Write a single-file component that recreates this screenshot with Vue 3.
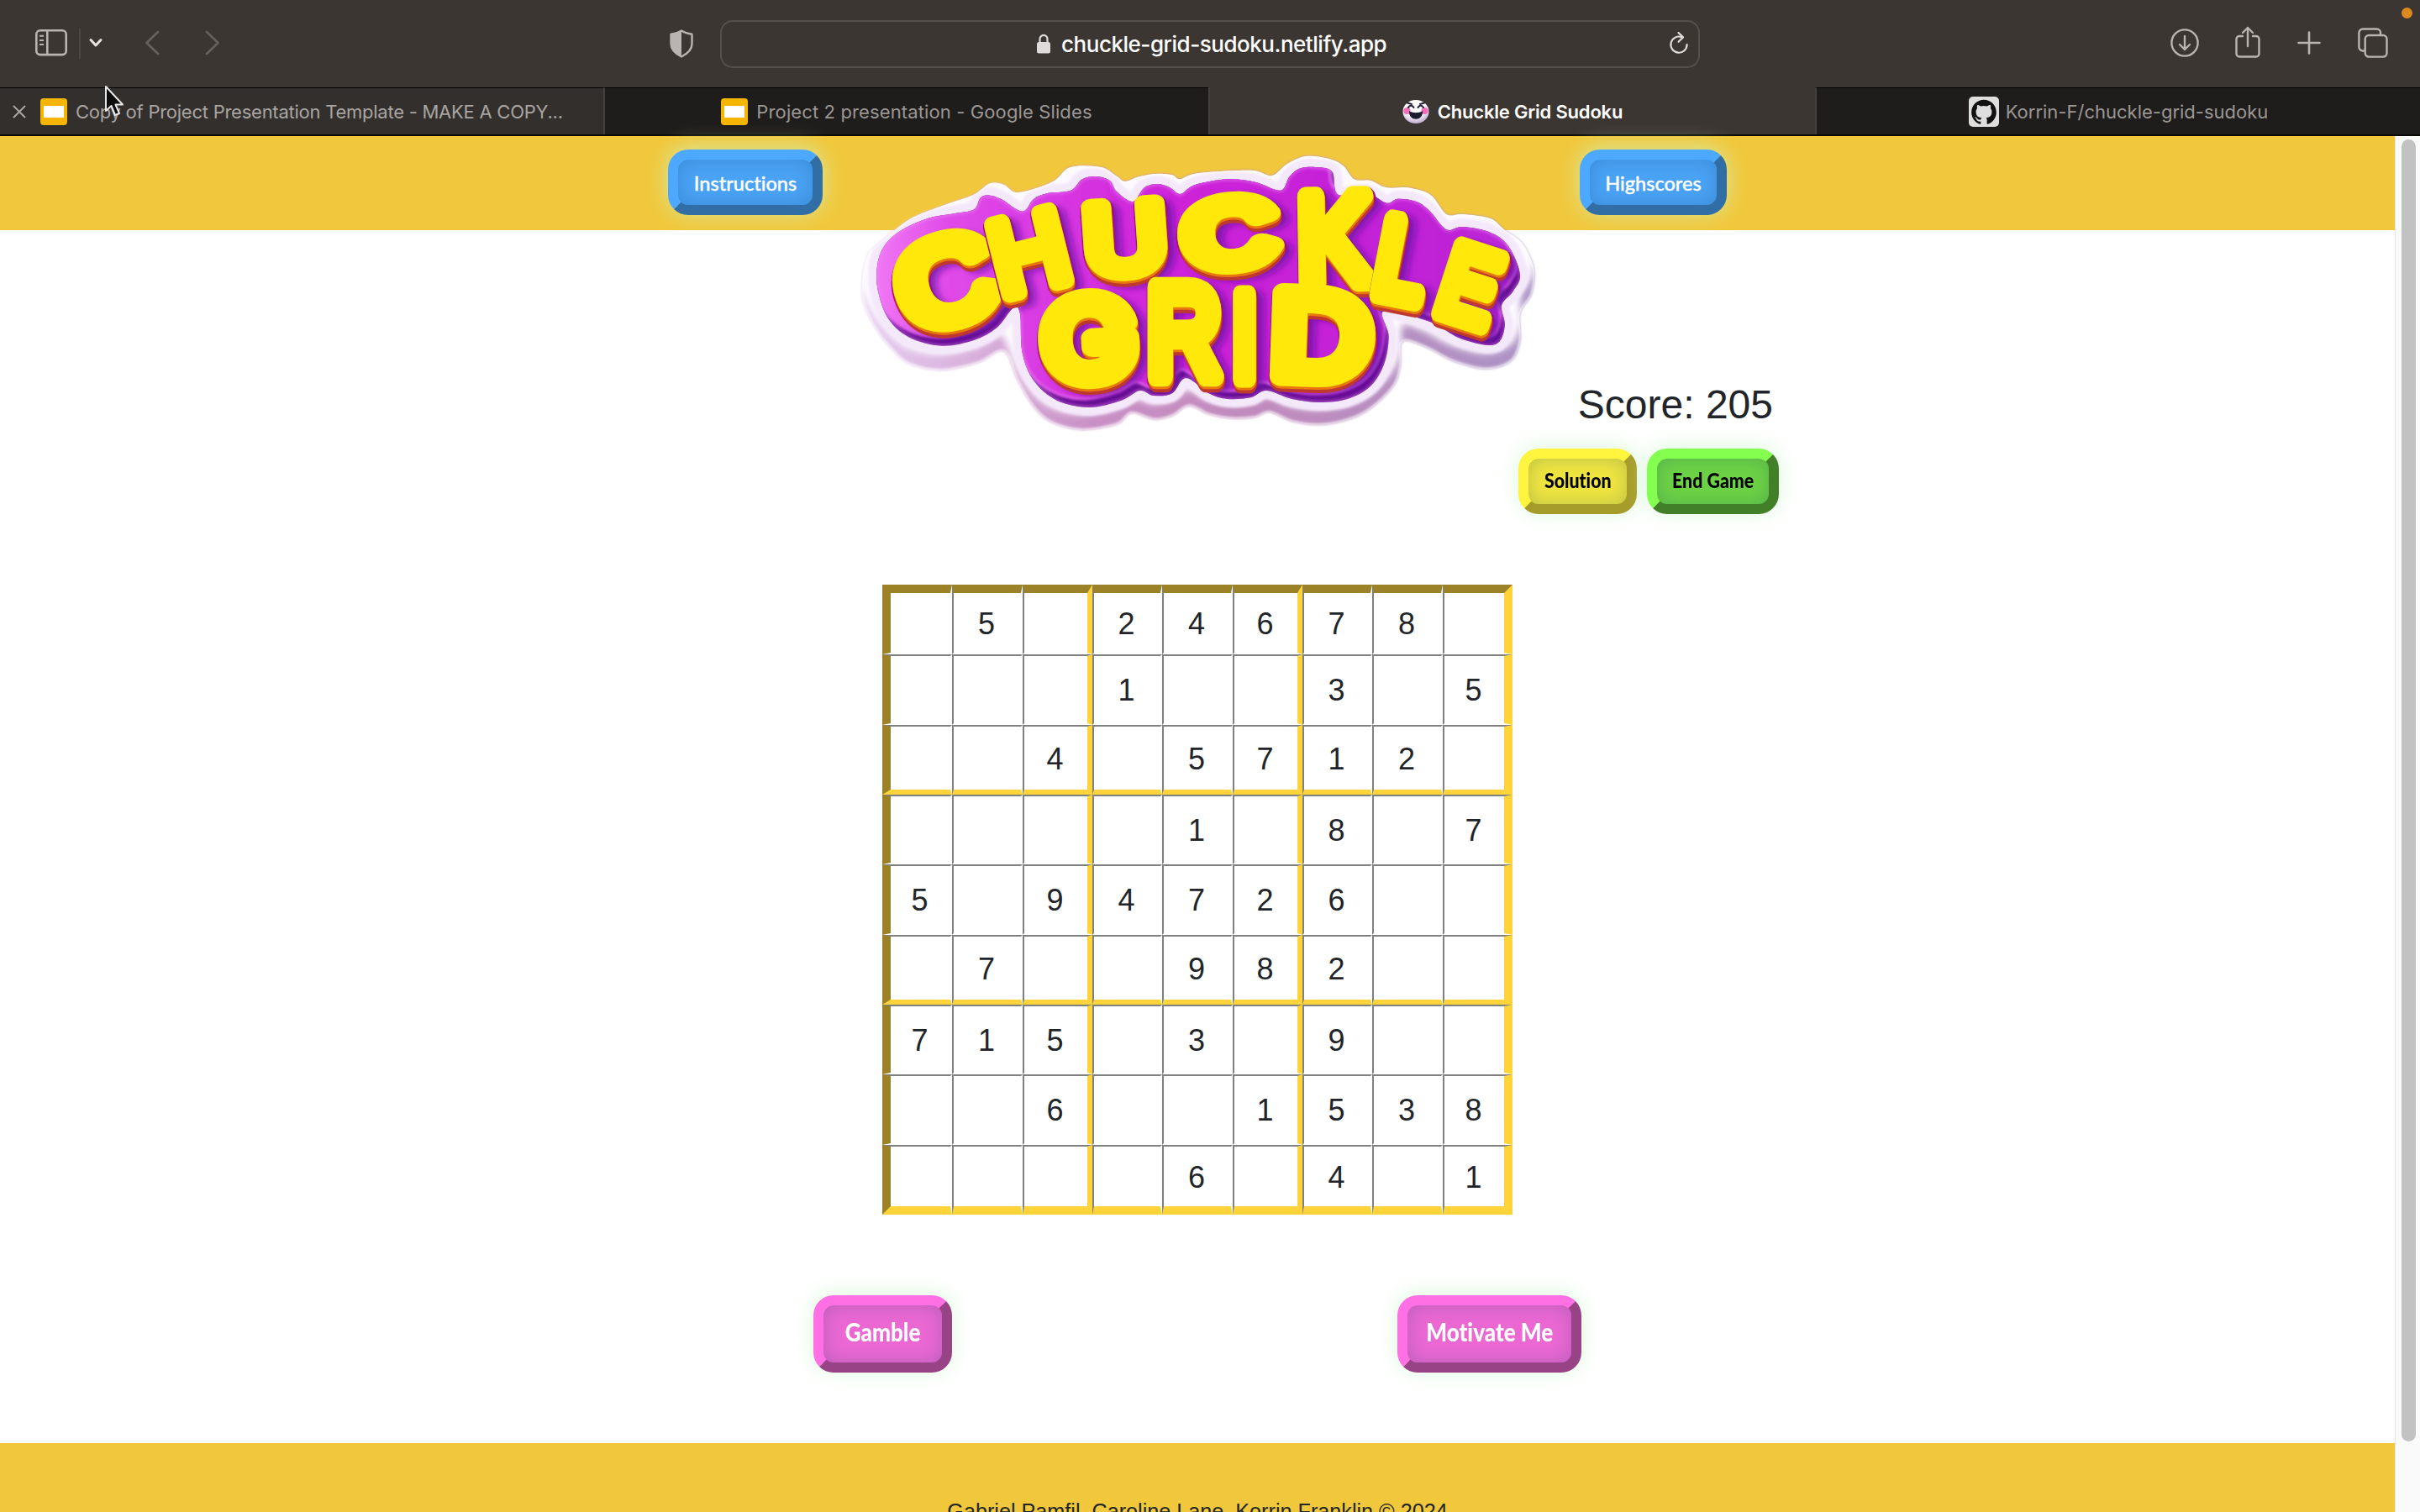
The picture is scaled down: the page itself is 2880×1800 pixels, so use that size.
<script setup>
const rows = [
  ' 5 24678 ',
  '   1  3 5',
  '  4 5712 ',
  '    1 8 7',
  '5 94726  ',
  ' 7  982  ',
  '715 3 9  ',
  '  6  1538',
  '    6 4 1',
].map((r) => r.split(''))

// centre, rotation, stretch and thickness of each letter of the logo
const letters = [
  { c: 'C', x: 126, y: 175, r: -16, sx: 1.1, sy: 0.94, w: 26 },
  { c: 'H', x: 225, y: 141, r: -14, sx: 0.85, sy: 0.85, w: 20 },
  { c: 'U', x: 339, y: 124, r: -4, sx: 0.92, sy: 0.79, w: 22 },
  { c: 'C', x: 463, y: 118, r: -5, sx: 1.03, sy: 0.74, w: 27 },
  { c: 'K', x: 588, y: 125, r: -1, sx: 0.9, sy: 1.02, w: 22 },
  { c: 'L', x: 668, y: 150, r: 11, sx: 0.72, sy: 0.9, w: 22 },
  { c: 'E', x: 749, y: 180, r: 18, sx: 0.68, sy: 0.84, w: 20 },
  { c: 'G', x: 296, y: 246, r: -3, sx: 1.02, sy: 0.88, w: 26, f: 'inter' },
  { c: 'R', x: 409, y: 235, r: 0, sx: 0.83, sy: 1.05, w: 22 },
  { c: 'I', x: 481, y: 241, r: 0, sx: 0.8, sy: 1.0, w: 19 },
  { c: 'D', x: 572, y: 240, r: 2, sx: 1.12, sy: 0.98, w: 26 },
]
const layers = [
  { n: 'rim', dx: 1, dy: 3, w: 4 },
  { n: 'low', dx: 1, dy: 7, w: 0 },
  { n: 'mid', dx: 0.5, dy: 3, w: 0 },
  { n: 'top', dx: 0, dy: 0, w: 0 },
]
const place = (l, dx = 0, dy = 0) =>
  `translate(${l.x + dx} ${l.y + dy}) rotate(${l.r}) scale(${l.sx} ${l.sy})`

const smooth = (s) => {
  const p = s.split(' ').map((q) => q.split(',').map(Number)).map(([x, y]) => [x * 0.5485, y / 3])
  const n = p.length
  const f = (a) => a[0].toFixed(1) + ' ' + a[1].toFixed(1)
  let d = 'M' + f(p[0])
  for (let i = 0; i < n; i++) {
    const a = p[(i + n - 1) % n], b = p[i], c = p[(i + 1) % n], e = p[(i + 2) % n]
    d += `C${f([b[0] + (c[0] - a[0]) / 6, b[1] + (c[1] - a[1]) / 6])} ${f([c[0] - (e[0] - b[0]) / 6, c[1] - (e[1] - b[1]) / 6])} ${f(c)}`
  }
  return d + 'Z'
}
const outer = smooth('120,340 160,295 230,250 290,215 325,175 355,180 380,207 420,195 465,165 500,117 565,117 600,150 618,168 650,150 690,140 720,145 737,160 770,140 850,130 900,130 937,147 970,105 1010,78 1055,85 1090,110 1115,160 1150,165 1185,190 1230,190 1280,215 1315,285 1350,285 1410,300 1440,340 1480,390 1505,480 1500,570 1475,640 1475,740 1455,810 1400,838 1330,810 1270,760 1220,740 1215,830 1200,900 1150,980 1100,1020 1040,1037 980,1025 932,992 900,1010 850,1015 800,1000 757,970 720,1005 680,1018 632,995 600,1035 525,1055 460,1030 420,975 385,880 355,775 300,815 220,842 150,820 110,765 75,690 50,600 48,520 60,430 90,380')
const inner = smooth('82,560 80,470 95,400 130,345 190,300 250,282 290,268 305,225 325,218 350,232 395,275 420,230 450,210 500,200 525,160 555,150 585,165 600,205 635,240 660,190 690,177 715,190 738,213 770,180 840,160 900,170 955,200 975,150 1000,120 1040,118 1068,135 1080,215 1140,207 1185,245 1210,230 1250,240 1280,275 1315,340 1350,330 1410,350 1450,400 1475,500 1460,560 1435,610 1442,680 1430,740 1400,752 1340,725 1280,670 1180,630 1190,720 1180,820 1150,900 1100,945 1040,957 980,945 925,915 890,940 840,945 800,925 750,870 720,925 680,933 650,915 610,950 540,975 470,950 420,880 395,780 390,640 375,620 340,690 290,735 220,755 150,725 105,660')
</script>

<template>
  <div class="screen">
    <div class="toolbar">
      <svg class="ic-side" width="38" height="32" viewBox="0 0 38 32" fill="none" stroke="#b9b4b1" stroke-width="2.6">
        <rect x="1.3" y="1.3" width="35.4" height="28.8" rx="4.5" />
        <path d="M14.3 1.5V30" /><path d="M5 7.8h5M5 13h5M5 18h5" stroke-width="2" />
      </svg>
      <i class="vline"></i>
      <svg class="ic-chev" width="16" height="12" viewBox="0 0 16 12" fill="none" stroke="#e6e2e0" stroke-width="3" stroke-linecap="round" stroke-linejoin="round"><path d="M2 2.5l6 6.5 6-6.5" /></svg>
      <svg class="ic-back" width="18" height="30" viewBox="0 0 18 30" fill="none" stroke="#65605d" stroke-width="2.8" stroke-linecap="round" stroke-linejoin="round"><path d="M16 2L2.5 15 16 28" /></svg>
      <svg class="ic-fwd" width="18" height="30" viewBox="0 0 18 30" fill="none" stroke="#65605d" stroke-width="2.8" stroke-linecap="round" stroke-linejoin="round"><path d="M2 2l13.5 13L2 28" /></svg>
      <svg class="ic-shield" width="28" height="34" viewBox="0 0 28 34"><path d="M14 1.5C10 4 6 5 1.5 5.8V17c0 7.5 5.5 12 12.500 15.500C21 29 26.500 24.500 26.500 17V5.800C22 5 18 4 14 1.500z" fill="none" stroke="#b9b4b1" stroke-width="2.4" stroke-linejoin="round" /><path d="M14 1.500C10 4 6 5 1.500 5.800V17c0 7.500 5.500 12 12.500 15.500z" fill="#b9b4b1" /></svg>
      <div class="url">
        <svg width="18" height="24" viewBox="0 0 18 24"><rect x="1" y="10" width="16" height="13.500" rx="2.500" fill="#dedcdb" /><path d="M4.500 11V6.500a4.500 4.700 0 0 1 9 0V11" fill="none" stroke="#dedcdb" stroke-width="2.200" /></svg>
        <span>chuckle-grid-sudoku.netlify.app</span>
        <svg class="reload" width="24" height="28" viewBox="0 0 24 28" fill="none" stroke="#dedcdb" stroke-width="2.200" stroke-linecap="round" stroke-linejoin="round"><path d="M15.500 7.200A9.600 9.600 0 1 0 21.600 16" /><path d="M11.500 2l5.500 5.400-5.500 5.400" /></svg>
      </div>
      <svg class="ic-dl" width="34" height="34" viewBox="0 0 34 34" fill="none" stroke="#b9b4b1" stroke-width="2.400" stroke-linecap="round" stroke-linejoin="round"><circle cx="17" cy="17" r="15.600" /><path d="M17 9v16M11 19l6 6 6-6" /></svg>
      <svg class="ic-share" width="30" height="38" viewBox="0 0 30 38" fill="none" stroke="#b9b4b1" stroke-width="2.400" stroke-linecap="round" stroke-linejoin="round"><path d="M9 12H5a3.500 3.500 0 0 0-3.500 3.500V33A3.500 3.500 0 0 0 5 36.500h20a3.500 3.500 0 0 0 3.500-3.500V15.500A3.500 3.500 0 0 0 25 12h-4" /><path d="M15 24V2M9 8l6-6 6 6" /></svg>
      <svg class="ic-plus" width="28" height="28" viewBox="0 0 28 28" fill="none" stroke="#b9b4b1" stroke-width="2.600" stroke-linecap="round"><path d="M14 1.500v25M1.500 14h25" /></svg>
      <svg class="ic-tabs" width="36" height="36" viewBox="0 0 36 36" fill="none" stroke="#b9b4b1" stroke-width="2.400"><path d="M8.500 27.500H6A4.500 4.500 0 0 1 1.400 23V6A4.500 4.500 0 0 1 6 1.500h16.500A4.500 4.500 0 0 1 27 6v2.500" /><rect x="8.700" y="9" width="25.800" height="25.600" rx="4.500" /></svg>
      <i class="dot"></i>
    </div>

    <div class="tabs">
      <div class="tab first">
        <svg class="close" width="16" height="16" viewBox="0 0 16 16" stroke="#a9a5a2" stroke-width="2" stroke-linecap="round"><path d="M1.500 1.500l13 13M14.500 1.500l-13 13" /></svg>
        <i class="slides"><b></b></i><span class="t1">Copy of Project Presentation Template - MAKE A COPY...</span>
      </div>
      <div class="tab"><i class="slides"><b></b></i><span class="t2">Project 2 presentation - Google Slides</span></div>
      <div class="tab active">
        <svg width="32" height="30" viewBox="0 0 32 30">
          <defs><radialGradient id="fc" cx=".45" cy=".3" r=".75"><stop offset=".5" stop-color="#fff" /><stop offset="1" stop-color="#b79fc9" /></radialGradient></defs>
          <ellipse cx="16" cy="15" rx="15.500" ry="14" fill="url(#fc)" />
          <ellipse cx="5.500" cy="14" rx="4" ry="4" fill="#f46bb8" /><ellipse cx="26.500" cy="14" rx="4" ry="4" fill="#f46bb8" />
          <path d="M7 10c1.500-3 5-3 6.500 0M18.500 10c1.500-3 5-3 6.500 0M6 4.500l5 1.500M26 4.500L21 6" fill="none" stroke="#241e30" stroke-width="2" stroke-linecap="round" />
          <path d="M8 14c4 2 12 2 16 0 1 13-17 13-16 0z" fill="#1a1c30" /><path d="M9.500 14.500c4 1.300 9 1.300 13 0" stroke="#fff" stroke-width="1.200" fill="none" />
        </svg>
        <span class="t3">Chuckle Grid Sudoku</span>
      </div>
      <div class="tab">
        <svg width="36" height="36" viewBox="0 0 36 36"><rect width="36" height="36" rx="5" fill="#dedede" /><g transform="translate(3.200 3.500) scale(1.233)"><path fill="#111" d="M12 .297c-6.630 0-12 5.373-12 12 0 5.303 3.438 9.800 8.205 11.385.6.113.82-.258.82-.577 0-.285-.01-1.040-.015-2.040-3.338.724-4.042-1.610-4.042-1.610C4.422 18.070 3.633 17.700 3.633 17.700c-1.087-.744.084-.729.084-.729 1.205.084 1.838 1.236 1.838 1.236 1.070 1.835 2.809 1.305 3.495.998.108-.776.417-1.305.76-1.605-2.665-.3-5.466-1.332-5.466-5.930 0-1.310.465-2.380 1.235-3.220-.135-.303-.54-1.523.105-3.176 0 0 1.005-.322 3.300 1.230.96-.267 1.980-.399 3-.405 1.020.006 2.040.138 3 .405 2.280-1.552 3.285-1.230 3.285-1.230.645 1.653.24 2.873.12 3.176.765.840 1.230 1.910 1.230 3.220 0 4.610-2.805 5.625-5.475 5.920.42.360.81 1.096.81 2.220 0 1.606-.015 2.896-.015 3.286 0 .315.21.690.825.570C20.565 22.092 24 17.592 24 12.297c0-6.627-5.373-12-12-12" /></g></svg>
        <span class="t4">Korrin-F/chuckle-grid-sudoku</span>
      </div>
    </div>

    <div class="page">
      <div class="content">
        <header>
          <button class="btn blue b1"><span>Instructions</span></button>
          <svg class="logo" width="860" height="370" viewBox="0 0 860 370">
            <defs>
              <clipPath id="co"><path :d="outer" /></clipPath>
              <clipPath id="ci"><path :d="inner" /></clipPath>
              <linearGradient id="side" x1="0" y1="0" x2="1" y2="0"><stop offset="0" stop-color="#e6cdf0" /><stop offset=".35" stop-color="#c88fc4" /><stop offset=".6" stop-color="#c08abc" /><stop offset="1" stop-color="#ab93c6" /></linearGradient>
              <linearGradient id="pur" x1="0" y1="0" x2="1" y2="0"><stop offset="0" stop-color="#f07af5" /><stop offset=".12" stop-color="#e04ae8" /><stop offset=".5" stop-color="#cc20d8" /><stop offset="1" stop-color="#bb25d6" /></linearGradient>
              <filter id="s1" x="-10%" y="-10%" width="120%" height="120%"><feGaussianBlur stdDeviation="1.500" /></filter>
              <filter id="s4" x="-10%" y="-10%" width="120%" height="120%"><feGaussianBlur stdDeviation="4" /></filter>
            </defs>
            <path :d="outer" fill="url(#side)" filter="url(#s1)" />
            <g clip-path="url(#co)">
              <path :d="outer" transform="translate(-2 -22)" fill="#fdfaff" stroke="#fdfaff" stroke-width="6" filter="url(#s4)" />
              <path :d="inner" fill="none" stroke="#f4e8fb" stroke-width="20" filter="url(#s1)" />
              <path :d="outer" fill="none" stroke="#fff" stroke-width="4" stroke-opacity=".5" filter="url(#s1)" />
            </g>
            <path :d="inner" fill="#650d93" />
            <g clip-path="url(#ci)">
              <path :d="inner" transform="translate(-5 -10)" fill="url(#pur)" stroke="#e35fec" stroke-width="3" filter="url(#s1)" />
              <path :d="inner" fill="none" stroke="#f08cf6" stroke-width="5" stroke-opacity=".35" filter="url(#s1)" />
              <g class="ink shade" filter="url(#s4)"><text v-for="(l, i) in letters" :key="i" :class="l.f" :transform="place(l, 9, 7)" :stroke-width="l.w + 2" y="50">{{ l.c }}</text></g>
            </g>
            <g v-for="(l, i) in letters" :key="i" class="ink">
              <text v-for="k in layers" :key="k.n" :class="[k.n, l.f]" :transform="place(l, k.dx, k.dy)" :stroke-width="l.w + k.w" y="50">{{ l.c }}</text>
            </g>
          </svg>
          <button class="btn blue b2"><span>Highscores</span></button>
        </header>

        <section class="status">
          <div class="score">Score: 205</div>
          <div class="actions">
            <button class="btn yellow"><span>Solution</span></button>
            <button class="btn green"><span>End Game</span></button>
          </div>
        </section>

        <div class="board">
          <template v-for="(r, y) in rows" :key="y">
            <div v-for="(v, x) in r" :key="x" class="cell" :class="{ l: x === 0, t: y === 0, r: x === 8, b: y === 8, mr: x === 2 || x === 5, mb: y === 2 || y === 5 }">{{ v }}</div>
          </template>
        </div>

        <div class="extras">
          <button class="btn pink p1"><span>Gamble</span></button>
          <button class="btn pink p2"><span>Motivate Me</span></button>
        </div>

        <footer><span>Gabriel Pamfil, Caroline Lane, Korrin Franklin © 2024</span></footer>
      </div>
      <div class="scroll"><i></i></div>
    </div>

    <svg class="cursor" width="28" height="40" viewBox="0 0 28 40"><path d="M3 2v29l6.500-6 4.500 11 5-2-4.500-10.500H23z" fill="#0b0b0b" stroke="#e8e8e8" stroke-width="2" stroke-linejoin="round" /></svg>
  </div>
</template>

<style>
body { margin: 0; overflow: hidden; }
</style>

<style scoped>
* { box-sizing: border-box; }
.screen { position: relative; width: 2880px; height: 1800px; overflow: hidden; background: #fff; font-family: "Liberation Sans", sans-serif; color: #212529; display: flex; flex-direction: column; }
svg { display: block; flex: none; }
i { display: block; flex: none; }
.toolbar { height: 104px; flex: none; background: #3c3633; display: flex; align-items: flex-start; font-family: Inter, sans-serif; }
.ic-side { margin: 35px 0 0 42px; }
.vline { width: 2px; height: 36px; margin: 34px 0 0 14px; background: #4c4744; }
.ic-chev { margin: 45px 0 0 10px; }
.ic-back { margin: 36px 0 0 50px; }
.ic-fwd { margin: 36px 0 0 54px; }
.ic-shield { margin: 35px 0 0 535px; }
.url { width: 1166px; height: 57px; margin: 24px 0 0 32px; border: 2px solid #55504d; border-radius: 15px; display: flex; align-items: center; padding-left: 374px; color: #fff; font-size: 26px; }
.url span { margin-left: 12px; flex: none; white-space: nowrap; font-weight: 500; letter-spacing: -0.47px; }
.url svg { margin-top: -1px; }
.url .reload { margin: -4px 11px 0 auto; }
.ic-dl { margin: 34px 0 0 560px; }
.ic-share { margin: 31px 0 0 43px; }
.ic-plus { margin: 37px 0 0 44px; }
.ic-tabs { margin: 33px 0 0 44px; }
.dot { width: 13px; height: 13px; border-radius: 50%; background: #dc8a1f; margin: 9px 0 0 16px; }

.tabs { height: 58px; flex: none; display: flex; background: #1f1d1b; border-bottom: 2px solid #0a0906; font-family: Inter, sans-serif; font-size: 22px; color: #9a9794; }
.tab { flex: none; width: 720px; display: flex; align-items: center; justify-content: center; border-top: 1px solid #000; border-left: 2px solid #45403d; white-space: nowrap; padding-top: 1px; }
.tab.first { width: 718px; justify-content: flex-start; background: #332f2c; border-left: 0; padding-left: 15px; color: #a9a5a2; }
.tab.active { width: 722px; background: #3c3633; border-top-color: #3c3633; color: #fff; font-weight: 600; }
.tab span { margin-left: 10px; }
.tab .t1 { letter-spacing: -0.25px; }
.tab .t2 { letter-spacing: 0.12px; }
.tab .t3 { letter-spacing: -0.2px; }
.tab .t4 { margin-left: 8px; }
.close { margin-right: 17px; }
.slides { width: 32px; height: 32px; border-radius: 4px; background: #f6b500; padding: 9px 4px; }
.slides b { display: block; height: 14px; background: #fff; }

.page { flex: 1; display: flex; min-height: 0; }
.content { width: 2850px; flex: none; display: flex; flex-direction: column; }
.scroll { width: 30px; background: #fafafa; border-left: 1px solid #e6e6e6; padding: 4px 0 0 7px; }
.scroll i { width: 17px; height: 1550px; border-radius: 9px; background: #c2c2c2; }

header { height: 112px; flex: none; background: #f1c83b; display: flex; align-items: flex-start; padding-left: 795px; }
.logo { margin: -2px 20px 0 21px; position: relative; overflow: visible; }
.ink text { font-family: "Liberation Sans", sans-serif; font-size: 146px; text-anchor: middle; vector-effect: non-scaling-stroke; stroke-linejoin: round; stroke-linecap: round; }
.ink text.inter { font-family: Inter, sans-serif; }
.shade text { fill: #6a0fa4; stroke: #6a0fa4; opacity: .75; }
.ink .rim { fill: #a00f8a; stroke: #a00f8a; }
.ink .low { fill: #bf3830; stroke: #bf3830; }
.ink .mid { fill: #e8780c; stroke: #e8780c; }
.ink .top { fill: #ffe80a; stroke: #ffe80a; }

.btn { height: 78px; flex: none; padding: 0; margin: 0; border: 12px solid; border-radius: 24px; display: flex; align-items: center; justify-content: center; white-space: nowrap; font-family: Lato, sans-serif; font-variant-ligatures: none; box-shadow: 0 -2px 26px rgba(205, 245, 205, .7), inset 0 0 22px rgba(0, 60, 100, .22); }
.btn span { display: block; }
.blue { margin-top: 16px; width: 184px; color: #fff; font-size: 23.500px; font-weight: 500; background: #4aa3f5; border-color: #4da9ff #316ea6 #316ea6 #4da9ff; }
.blue span { padding-top: 1px; -webkit-text-stroke: 0.4px #fff; }
.b2 { width: 175px; }
.yellow, .green { font-size: 24px; font-weight: 900; color: #000; }
.yellow { width: 141px; background: #f0e640; border-color: #fff53f #a69c29 #a69c29 #fff53f; }
.green { width: 157px; background: #6dd345; border-color: #84ff4f #418028 #418028 #84ff4f; }
.pink { height: 92px; font-size: 30px; font-weight: 900; color: #fff; background: #eb68d3; border-color: #ff70e5 #984386 #984386 #ff70e5; }
.p1 { width: 165px; }
.p2 { width: 219px; }
.btn.yellow span, .btn.green span { transform: scaleX(.89); padding-bottom: 3px; }
.btn.pink span { transform: scaleX(.87); padding-bottom: 6px; }

.status { height: 422px; flex: none; padding: 179px 733px 0 0; display: flex; flex-direction: column; align-items: flex-end; }
.score { font-size: 48px; line-height: 58px; padding-right: 7px; }
.actions { display: flex; gap: 12px; margin-top: 23px; }

.board { width: 750px; height: 750px; flex: none; margin: 0 auto; display: grid; grid-template-columns: repeat(3, 83px 84px 83px); grid-template-rows: repeat(3, 83px 84px 83px); }
.cell { min-width: 0; min-height: 0; display: flex; align-items: center; justify-content: center; font-size: 36px; line-height: 36px; padding: 2px 2px 0 0; border: 2px solid; border-color: #808080 #fff #fff #808080; }
.cell.l { border-left: 10px solid #9b8227; }
.cell.t { border-top: 10px solid #9b8227; }
.cell.r { border-right: 10px solid #ffd43b; }
.cell.b { border-bottom: 10px solid #ffd43b; }
.cell.mr { border-right: 6px solid #ffd43b; }
.cell.mb { border-bottom: 6px solid #ffd43b; }

.extras { height: 272px; flex: none; display: flex; justify-content: space-between; padding: 96px 968px 0 968px; }
footer { flex: 1; min-height: 0; overflow: hidden; background: #f1c83b; display: flex; justify-content: center; padding-top: 67px; font-size: 25.200px; line-height: 28px; white-space: nowrap; }
.cursor { position: absolute; left: 123px; top: 101px; }
</style>
